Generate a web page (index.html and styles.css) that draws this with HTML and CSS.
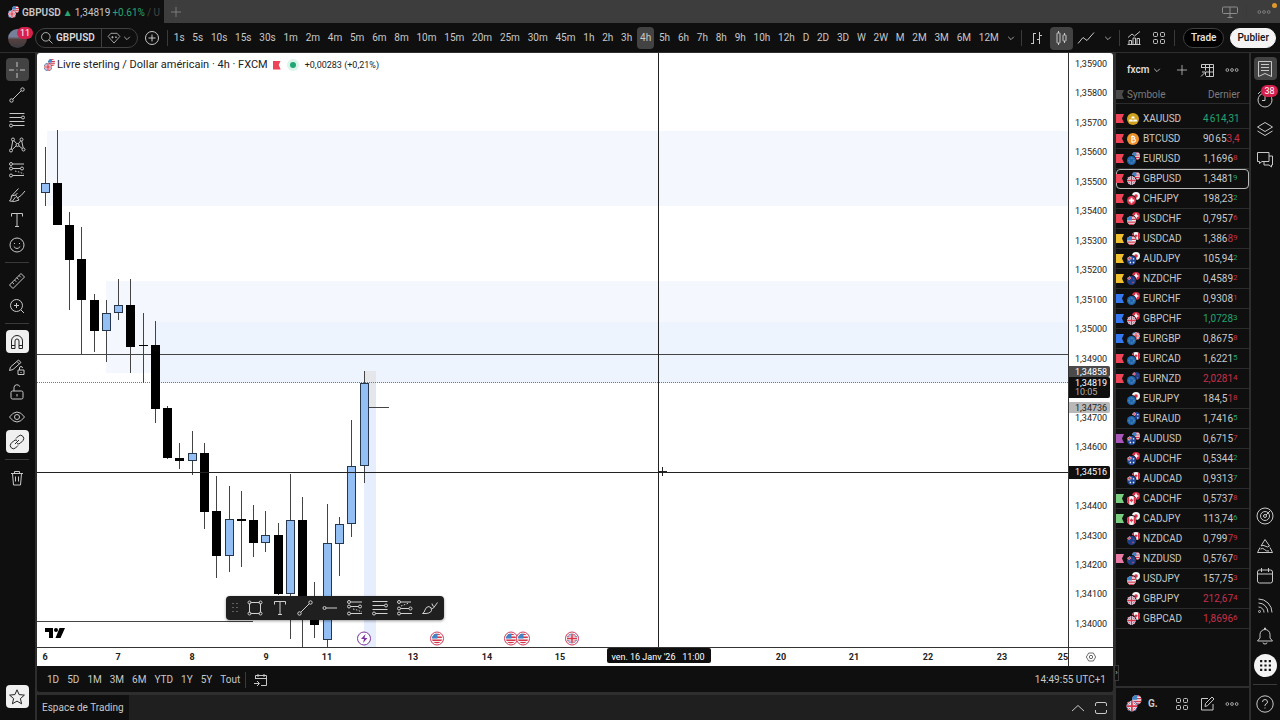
FILE: index.html
```html
<!DOCTYPE html>
<html lang="fr">
<head>
    <meta charset="utf-8">
    <meta name="viewport" content="width=device-width, initial-scale=1">
    <title>GBPUSD 1,34819</title>
    <link rel="stylesheet" href="styles.css">
</head>

<body>
    <!-- icons and flags -->
    <svg class="sprite" aria-hidden="true">
        <defs>
            <clipPath id="round"><circle cx="10" cy="10" r="10"/></clipPath>
        </defs>

        <symbol id="usd" viewBox="0 0 20 20"><g clip-path="url(#round)"><path fill="#f0f0f0" d="M0 0h20v20H0z"/><path fill="#d8344c" d="M0 0h20v3H0zM0 6h20v3H0zM0 12h20v3H0zM0 17h20v3H0z"/><path fill="#3f86c8" d="M0 0h11v10H0z"/></g></symbol>
        <symbol id="gbp" viewBox="0 0 20 20"><g clip-path="url(#round)"><path fill="#2c4d9c" d="M0 0h20v20H0z"/><path stroke="#f0f0f0" stroke-width="4" d="M0 0l20 20M20 0L0 20"/><path stroke="#d8344c" stroke-width="1.5" d="M0 0l20 20M20 0L0 20"/><path stroke="#f0f0f0" stroke-width="6" d="M10 0v20M0 10h20"/><path stroke="#d8344c" stroke-width="3" d="M10 0v20M0 10h20"/></g></symbol>
        <symbol id="eur" viewBox="0 0 20 20"><g clip-path="url(#round)"><path fill="#1f64ad" d="M0 0h20v20H0z"/><circle cx="10" cy="10" r="5.5" fill="none" stroke="#8fb7a0" stroke-width="2" stroke-dasharray="2 2"/></g></symbol>
        <symbol id="chf" viewBox="0 0 20 20"><g clip-path="url(#round)"><path fill="#dc3049" d="M0 0h20v20H0z"/><path stroke="#fff" stroke-width="4" d="M10 4v12M4 10h12"/></g></symbol>
        <symbol id="jpy" viewBox="0 0 20 20"><g clip-path="url(#round)"><path fill="#f4f4f4" d="M0 0h20v20H0z"/><circle cx="10" cy="10" r="4.5" fill="#dc3049"/></g></symbol>
        <symbol id="cad" viewBox="0 0 20 20"><g clip-path="url(#round)"><path fill="#f4f4f4" d="M0 0h20v20H0z"/><path fill="#dc3049" d="M0 0h5v20H0zM15 0h5v20h-5zM10 5l1.500 2.500 2.500 0-1 3.500-2.500 1.500V15h-1v-2.500L7 11 6 7.500l2.500 0z"/></g></symbol>
        <symbol id="aud" viewBox="0 0 20 20"><g clip-path="url(#round)"><path fill="#234a9a" d="M0 0h20v20H0z"/><path stroke="#f0f0f0" stroke-width="4" d="M5 0v10M0 5h10"/><path stroke="#dc3049" stroke-width="2" d="M5 0v10M0 5h10"/><path fill="#fff" d="M13 5h3v3h-3zM6 13h3v3H6zM13 13h3v3h-3z"/></g></symbol>
        <symbol id="nzd" viewBox="0 0 20 20"><g clip-path="url(#round)"><path fill="#1f4088" d="M0 0h20v20H0z"/><path stroke="#f0f0f0" stroke-width="3" d="M5 0v9M0 5h9"/><path stroke="#dc3049" stroke-width="2" d="M5 0v9M0 5h9"/><path fill="#e0526a" d="M14 6h2v2h-2zM12 13h3v3h-3z"/></g></symbol>
        <symbol id="xau" viewBox="0 0 20 20"><circle cx="10" cy="10" r="10" fill="#d0a01f"/><path fill="#fff" d="M8 6h4l1 3H7zM4 11h5l1 3H3zM11 11h5l1 3h-7z"/></symbol>
        <symbol id="btc" viewBox="0 0 20 20"><circle cx="10" cy="10" r="10" fill="#f0932b"/><path fill="none" stroke="#fff" stroke-width="1.800" d="M8 5v10M7 6h4q2 .5 2 2t-2 2H8h4q2 .5 2 2.300T12 15H7M9.500 4v2M9.500 15v2"/></symbol>

        <symbol id="i-cross" viewBox="0 0 18 18"><path d="M9 1v5M9 12v5M1 9h5M12 9h5M8.500 9h1"/></symbol>
        <symbol id="i-trend" viewBox="0 0 18 18"><circle cx="3.500" cy="14.500" r="1.700"/><circle cx="14.500" cy="3.500" r="1.700"/><path d="M4.800 13.200l8.400-8.400"/></symbol>
        <symbol id="i-fib" viewBox="0 0 18 18"><path d="M1.500 2.500h15M1.500 6.500h12M1.500 10.500h15M4.500 14.500h12"/><circle cx="15" cy="6.500" r="1.500"/><circle cx="3" cy="14.500" r="1.500"/></symbol>
        <symbol id="i-pattern" viewBox="0 0 18 18"><circle cx="3" cy="14.500" r="1.500"/><circle cx="5" cy="3.500" r="1.500"/><circle cx="9.500" cy="9" r="1.500"/><circle cx="13.500" cy="3.500" r="1.500"/><circle cx="15.500" cy="13.500" r="1.500"/><path d="M3.300 13L4.700 5M6 4.700l2.700 3M4.200 13.600l4-3.700M10.300 7.800l2.400-3M10.800 9.800l3.400 2.700M13.700 5l1.500 7"/></symbol>
        <symbol id="i-forecast" viewBox="0 0 18 18"><circle cx="3" cy="3" r="1.500"/><circle cx="3" cy="7.500" r="1.500"/><circle cx="14" cy="7.500" r="1.500"/><circle cx="3" cy="14.500" r="1.500"/><path d="M4.500 3H16M4.500 7.500h8M4.500 14.500H16"/><path stroke-dasharray="1.500 1.500" d="M7 10l4 1 5 2"/></symbol>
        <symbol id="i-long" viewBox="0 0 18 18"><circle cx="3" cy="3" r="1.500"/><circle cx="3" cy="9.500" r="1.500"/><circle cx="14.500" cy="9.500" r="1.500"/><circle cx="3" cy="14.500" r="1.500"/><path d="M4.500 3H15M4.500 9.500H13M4.500 14.500H16"/><path stroke-dasharray="1.500 1.500" d="M5 7l8-3"/></symbol>
        <symbol id="i-brush" viewBox="0 0 18 18"><path d="M1.500 15q2-1.500 2-5L10.500 2.500M1.500 15q5 1.500 9.500-1l-3.500-5-4 1M7.500 9l2-2M9.500 12q4-2 7.500-7M4.500 15l3-4"/></symbol>
        <symbol id="i-text" viewBox="0 0 18 18"><path d="M3.500 5.500v-3h11v3M9 2.500v13M7 15.500h4"/></symbol>
        <symbol id="i-smile" viewBox="0 0 18 18"><circle cx="9" cy="9" r="7"/><path d="M5.800 10.500q3.200 4 6.400 0M6.500 7v1M11.500 7v1"/></symbol>
        <symbol id="i-ruler" viewBox="0 0 18 18"><path d="M1.500 13L13 1.500 16.500 5 5 16.500zM4.200 10.300l1.800 1.800M6.500 8l1.800 1.800M8.800 5.700l1.800 1.800M11 3.500l1.800 1.800"/></symbol>
        <symbol id="i-zoom" viewBox="0 0 18 18"><circle cx="8.500" cy="8.500" r="6"/><path d="M13 13l3 3M8.500 6v5M6 8.500h5"/></symbol>
        <symbol id="i-magnet" viewBox="0 0 18 18"><path d="M3.500 15.500V8a5.500 5.500 0 0 1 11 0v7.500H11V8a2 2 0 0 0-4 0v7.500zM3.500 12.500H7M11 12.500h3.500"/></symbol>
        <symbol id="i-pencil" viewBox="0 0 18 18"><path d="M1.500 12.500l1-3.500 8-7 2.500 2.500-8 7zM9 3.500L11.500 6M10 12h6v4.500h-6zM11.500 12v-2a1.500 1.500 0 0 1 3 0M13 14v1"/></symbol>
        <symbol id="i-lock" viewBox="0 0 18 18"><rect x="3" y="8" width="12" height="8" rx="1.500"/><path d="M6 8V4.500a3 3 0 0 1 5.800-.8M9 11v2.500"/></symbol>
        <symbol id="i-eye" viewBox="0 0 18 18"><path d="M1.500 9Q5 4 9 4t7.500 5Q13 14 9 14T1.500 9z"/><circle cx="9" cy="9" r="2.500"/></symbol>
        <symbol id="i-link" viewBox="0 0 18 18"><path d="M8 5.500l2.500-2.500a3.200 3.200 0 0 1 4.500 4.500L12.500 10q-1.500 1.500-3.500.7M10 12.500L7.500 15A3.200 3.200 0 0 1 3 10.500L5.500 8Q7 6.500 9 7.300M7 11l4-4"/></symbol>
        <symbol id="i-trash" viewBox="0 0 18 18"><path d="M3 4.500h12M6.500 4.500v-2h5v2M4.500 4.500l1 11.500h7l1-11.500M7.500 7.500v5M10.500 7.500v5"/></symbol>
        <symbol id="i-star" viewBox="0 0 18 18"><path d="M9 1.800l2.100 4.800 5.300.5-4 3.500 1.200 5.200L9 13.100l-4.600 2.700 1.200-5.200-4-3.500 5.300-.5z"/></symbol>
        <symbol id="i-rect" viewBox="0 0 18 18"><path d="M4.500 3.500h9M4.500 14.500h9M3.500 4.500v9M14.500 4.500v9"/><circle cx="3.500" cy="3.500" r="1.500"/><circle cx="14.500" cy="3.500" r="1.500"/><circle cx="3.500" cy="14.500" r="1.500"/><circle cx="14.500" cy="14.500" r="1.500"/></symbol>
        <symbol id="i-ray" viewBox="0 0 18 18"><circle cx="3.500" cy="9" r="1.500"/><path d="M5 9h11"/></symbol>
        <symbol id="i-paint" viewBox="0 0 18 18"><path d="M1.500 14.500q2-1 2.500-3.500 1-3.500 4-3.500 3 1 2.500 4-1 3.500-9 3zM10 8.500q1 2 2.500.5l4-5.500M11 4.500q0 3 2.500 3"/></symbol>
        <symbol id="i-grip" viewBox="0 0 18 18"><path stroke-dasharray="1 3" stroke-width="1.500" d="M7 4v10M11 4v10"/></symbol>

        <symbol id="i-search" viewBox="0 0 18 18"><circle cx="7.500" cy="7.500" r="5.500"/><path d="M11.500 11.500L16 16"/></symbol>
        <symbol id="i-gem" viewBox="0 0 18 18"><path d="M5 3h8l3.500 4L9 15.500 1.500 7zM5.500 8h3M7 6.500v3M10.500 8h2M11.500 7v2"/></symbol>
        <symbol id="i-plus" viewBox="0 0 18 18"><path d="M9 2.500v13M2.500 9h13"/></symbol>
        <symbol id="i-add" viewBox="0 0 18 18"><circle cx="9" cy="9" r="6.500"/><path d="M9 5.500v7M5.500 9h7"/></symbol>
        <symbol id="i-down" viewBox="0 0 10 10"><path d="M1.500 3.500L5 7l3.500-3.500"/></symbol>
        <symbol id="i-bars" viewBox="0 0 18 18"><path d="M6.500 4v11M4 14.500h2.500M6.500 4.500H9M12.500 3v12M10 10.500h2.500M12.500 6.500H15"/></symbol>
        <symbol id="i-candles" viewBox="0 0 18 18"><path d="M6.500 2v2M6.500 14v2M12.500 4v2M12.500 12v2"/><rect x="5" y="4" width="3" height="10" rx=".5"/><rect x="11" y="6" width="3" height="6" rx=".5"/></symbol>
        <symbol id="i-line" viewBox="0 0 18 18"><path d="M1 14.500l5-6 4 3 7-8"/></symbol>
        <symbol id="i-indic" viewBox="0 0 18 18"><path d="M4 15.500v-4h2.500v4M8 15.500V9h2.500v6.500M12 15.500V9.500h2.500v6M3 8.500l4-3.500 2.500 2L15 2.500M2.500 15.500h13"/></symbol>
        <symbol id="i-grid" viewBox="0 0 18 18"><rect x="3.500" y="3.500" width="4" height="4" rx="1"/><rect x="10.500" y="3.500" width="4" height="4" rx="1"/><rect x="3.500" y="10.500" width="4" height="4" rx="1"/><rect x="10.500" y="10.500" width="4" height="4" rx="1"/></symbol>
        <symbol id="i-layout" viewBox="0 0 18 18"><rect x="1.500" y="4" width="15" height="6.500" rx="1"/><path d="M9 4v10.500M6.500 14.500h5"/></symbol>
        <symbol id="i-dots" viewBox="0 0 18 18"><circle cx="3" cy="9" r="1.800"/><circle cx="9" cy="9" r="1.800"/><circle cx="15" cy="9" r="1.800"/></symbol>
        <symbol id="i-table" viewBox="0 0 18 18"><path d="M3.500 7V3.500h12v12H8M3.500 6.500h12M7.500 3.500v6M11.500 3.500v12M8 11h8M7 11.500L3 15.500M4 11h3.500v3.500"/></symbol>
        <symbol id="i-list" viewBox="0 0 18 18"><path d="M2.500 1.500h13v15L9 13.500l-6.500 3zM5 4.500h8M5 7.500h8M5 10.500h8"/></symbol>
        <symbol id="i-clock" viewBox="0 0 18 18"><circle cx="9" cy="10" r="7"/><path d="M9 6v4.500H6M2 4l2.500-2.500"/></symbol>
        <symbol id="i-layers" viewBox="0 0 18 18"><path d="M9 2.500L16.500 7 9 11.500 1.500 7zM1.500 11L9 15.500l7.500-4.500"/></symbol>
        <symbol id="i-chat" viewBox="0 0 18 18"><path d="M1.500 2.500h11.500v9H6l-2.500 2v-2h-2zM13 6h3.500v9h-1v2l-2.500-2H8v-3.500"/></symbol>
        <symbol id="i-radar" viewBox="0 0 18 18"><circle cx="9" cy="9" r="8"/><circle cx="9" cy="9" r="4.500"/><circle cx="9" cy="9" r="1.500"/><path d="M10 8l4.500-4.500"/></symbol>
        <symbol id="i-peaks" viewBox="0 0 18 18"><path d="M5 9l4-6.500L13.500 9q-2 2-4.500 0-2-1.500-4 0zM4 10.500l-2.500 5h15L14 10.500M4.500 12q2.500-1.500 4 .5t4.500 1.500"/></symbol>
        <symbol id="i-cal" viewBox="0 0 18 18"><rect x="1.500" y="3" width="15" height="13" rx="2"/><path d="M1.500 7h15M5.500 1v4M12.500 1v4"/></symbol>
        <symbol id="i-feed" viewBox="0 0 18 18"><circle cx="3.500" cy="14.500" r="1"/><path d="M2.500 10a5.500 5.500 0 0 1 5.500 5.500M2.500 6a9.500 9.500 0 0 1 9.500 9.500M2.500 2a13.500 13.500 0 0 1 13.500 13.500"/></symbol>
        <symbol id="i-bell" viewBox="0 0 18 18"><path d="M1.500 14h15l-2.500-3V7.500a5 5 0 0 0-10 0V11zM7 15.500a2 1.500 0 0 0 4 0M8.500 2.500V1h1v1.500"/></symbol>
        <symbol id="i-help" viewBox="0 0 18 18"><circle cx="9" cy="9" r="8.200"/><path d="M6.500 7q0-2.500 2.500-2.500T11.500 7q0 1.300-1.500 2t-1 2M9 12.500v1"/></symbol>
        <symbol id="i-goto" viewBox="0 0 18 18"><path d="M4.500 8V4.500h11V14.500H10M4.500 7.500h11M7 3v3M13 3v3M3 12.500h5M6 10l2.500 2.500L6 15"/></symbol>
        <symbol id="i-up" viewBox="0 0 18 18"><path d="M3 12l6-5.500 6 5.500"/></symbol>
        <symbol id="i-full" viewBox="0 0 18 18"><path d="M3.500 7V5q0-1.500 1.500-1.500h8q1.500 0 1.500 1.500V7M3.500 11v2q0 1.500 1.500 1.500h8q1.500 0 1.500-1.500V11"/></symbol>
        <symbol id="i-edit" viewBox="0 0 18 18"><path d="M10 3.500H3.500v11.500h11.500V9M7 11.500l.5-3L14 2l2 2-6.500 6.700z"/></symbol>
        <symbol id="i-hex" viewBox="0 0 18 18"><path d="M5.500 3h7L16 9l-3.500 6h-7L2 9z"/><circle cx="9" cy="9" r="2.500"/></symbol>
    </svg>

    <header class="tabs">
        <div class="tab">
            <svg class="pair" viewBox="0 0 13 13"><use href="#usd" x="5" y="0" width="7" height="7"/><use href="#gbp" x="1" y="4" width="8" height="8"/></svg>
            <b>GBPUSD</b><span class="rise">▲</span><span>1,34819</span><span class="rise">+0.61%</span><span class="faded">/ U</span>
        </div>
        <button class="icon-btn dim" aria-label="Nouvel onglet"><svg class="ico small"><use href="#i-plus"/></svg></button>
        <div class="tabs-right">
            <button class="icon-btn dim" aria-label="Disposition"><svg class="ico"><use href="#i-layout"/></svg></button>
            <i class="vsep"></i>
            <button class="icon-btn dim notify" aria-label="Menu"><svg class="ico small"><use href="#i-dots"/></svg></button>
        </div>
    </header>

    <nav class="toolbar">
        <button class="avatar" aria-label="Profil"><span class="badge">11</span></button>
        <div class="search">
            <button class="symbol-btn"><svg class="ico small"><use href="#i-search"/></svg>GBPUSD</button>
            <button class="gem-btn" aria-label="Filtres"><svg class="ico small"><use href="#i-gem"/></svg><svg class="chev"><use href="#i-down"/></svg></button>
        </div>
        <button class="icon-btn" aria-label="Comparer"><svg class="ico"><use href="#i-add"/></svg></button>
        <i class="vsep"></i>
        <div class="intervals">
            <button>1s</button><button>5s</button><button>10s</button><button>15s</button><button>30s</button>
            <button>1m</button><button>2m</button><button>4m</button><button>5m</button><button>6m</button><button>8m</button>
            <button>10m</button><button>15m</button><button>20m</button><button>25m</button><button>30m</button><button>45m</button>
            <button>1h</button><button>2h</button><button>3h</button><button class="on">4h</button><button>5h</button><button>6h</button>
            <button>7h</button><button>8h</button><button>9h</button><button>10h</button><button>12h</button>
            <button>D</button><button>2D</button><button>3D</button><button>W</button><button>2W</button>
            <button>M</button><button>2M</button><button>3M</button><button>6M</button><button>12M</button>
            <button aria-label="Intervalles"><svg class="chev"><use href="#i-down"/></svg></button>
        </div>
        <i class="vsep"></i>
        <div class="styles">
            <button class="icon-btn" aria-label="Barres"><svg class="ico"><use href="#i-bars"/></svg></button>
            <button class="icon-btn on" aria-label="Bougies"><svg class="ico"><use href="#i-candles"/></svg></button>
            <button class="icon-btn" aria-label="Ligne"><svg class="ico"><use href="#i-line"/></svg></button>
            <button class="chev-btn" aria-label="Styles"><svg class="chev"><use href="#i-down"/></svg></button>
        </div>
        <i class="vsep"></i>
        <div class="styles">
            <button class="icon-btn" aria-label="Indicateurs"><svg class="ico"><use href="#i-indic"/></svg></button>
            <button class="icon-btn" aria-label="Modèles"><svg class="ico"><use href="#i-grid"/></svg></button>
        </div>
        <i class="vsep"></i>
        <div class="actions">
            <button class="pill">Trade</button>
            <button class="pill white">Publier</button>
        </div>
    </nav>

    <div class="workspace">
        <aside class="tools">
            <button class="icon-btn on" aria-label="Réticule"><svg class="ico"><use href="#i-cross"/></svg></button>
            <button class="icon-btn" aria-label="Ligne de tendance"><svg class="ico"><use href="#i-trend"/></svg></button>
            <button class="icon-btn" aria-label="Fibonacci"><svg class="ico"><use href="#i-fib"/></svg></button>
            <button class="icon-btn" aria-label="Figures"><svg class="ico"><use href="#i-pattern"/></svg></button>
            <button class="icon-btn" aria-label="Prévisions"><svg class="ico"><use href="#i-forecast"/></svg></button>
            <button class="icon-btn" aria-label="Pinceau"><svg class="ico"><use href="#i-brush"/></svg></button>
            <button class="icon-btn" aria-label="Texte"><svg class="ico"><use href="#i-text"/></svg></button>
            <button class="icon-btn" aria-label="Icônes"><svg class="ico"><use href="#i-smile"/></svg></button>
            <hr>
            <button class="icon-btn" aria-label="Mesurer"><svg class="ico"><use href="#i-ruler"/></svg></button>
            <button class="icon-btn" aria-label="Zoom"><svg class="ico"><use href="#i-zoom"/></svg></button>
            <hr>
            <button class="icon-btn white" aria-label="Aimant"><svg class="ico"><use href="#i-magnet"/></svg></button>
            <button class="icon-btn" aria-label="Mode dessin"><svg class="ico"><use href="#i-pencil"/></svg></button>
            <button class="icon-btn" aria-label="Verrouiller"><svg class="ico"><use href="#i-lock"/></svg></button>
            <button class="icon-btn" aria-label="Masquer"><svg class="ico"><use href="#i-eye"/></svg></button>
            <button class="icon-btn white" aria-label="Synchroniser"><svg class="ico"><use href="#i-link"/></svg></button>
            <hr>
            <button class="icon-btn" aria-label="Supprimer"><svg class="ico"><use href="#i-trash"/></svg></button>
            <button class="icon-btn white last" aria-label="Favoris"><svg class="ico"><use href="#i-star"/></svg></button>
        </aside>

        <main class="center">
            <section class="chart">
                <div class="pane">
                    <svg id="canvas" class="canvas"></svg>
                    <div class="legend">
                        <svg class="pair" viewBox="0 0 13 13"><use href="#usd" x="5" y="0" width="7" height="7"/><use href="#gbp" x="1" y="4" width="8" height="8"/></svg>
                        <span class="name">Livre sterling / Dollar américain · 4h · FXCM</span>
                        <i class="flag red"></i>
                        <i class="live"></i>
                        <span>+0,00283 (+0,21%)</span>
                    </div>
                    <div class="favorites">
                        <svg class="ico grip"><use href="#i-grip"/></svg>
                        <button aria-label="Rectangle"><svg class="ico"><use href="#i-rect"/></svg></button>
                        <button aria-label="Texte"><svg class="ico"><use href="#i-text"/></svg></button>
                        <button aria-label="Tendance"><svg class="ico"><use href="#i-trend"/></svg></button>
                        <button aria-label="Rayon"><svg class="ico"><use href="#i-ray"/></svg></button>
                        <button aria-label="Position vendeuse"><svg class="ico"><use href="#i-forecast"/></svg></button>
                        <button aria-label="Fibonacci"><svg class="ico"><use href="#i-fib"/></svg></button>
                        <button aria-label="Position acheteuse"><svg class="ico"><use href="#i-long"/></svg></button>
                        <button aria-label="Pinceau"><svg class="ico"><use href="#i-paint"/></svg></button>
                    </div>
                </div>
                <svg id="prices" class="prices"></svg>
                <svg id="times" class="times"></svg>
                <button class="axis-btn" aria-label="Réglages"><svg class="ico tiny"><use href="#i-hex"/></svg></button>
            </section>

            <section class="ranges">
                <button>1D</button><button>5D</button><button>1M</button><button>3M</button><button>6M</button>
                <button>YTD</button><button>1Y</button><button>5Y</button><button>Tout</button>
                <i class="vsep"></i>
                <button aria-label="Aller à"><svg class="ico"><use href="#i-goto"/></svg></button>
                <span class="clock">14:49:55 UTC+1</span>
            </section>

            <footer class="bottom">
                <button class="space">Espace de Trading</button>
                <div class="bottom-right">
                    <button class="icon-btn" aria-label="Ouvrir"><svg class="ico"><use href="#i-up"/></svg></button>
                    <button class="icon-btn" aria-label="Agrandir"><svg class="ico"><use href="#i-full"/></svg></button>
                </div>
            </footer>
        </main>

        <aside class="watch">
            <div class="watch-list">
                <div class="watch-head">
                    <button class="list-name">fxcm<svg class="chev"><use href="#i-down"/></svg></button>
                    <button class="icon-btn" aria-label="Ajouter"><svg class="ico small"><use href="#i-plus"/></svg></button>
                    <button class="icon-btn" aria-label="Tableau"><svg class="ico"><use href="#i-table"/></svg></button>
                    <button class="icon-btn" aria-label="Plus"><svg class="ico small"><use href="#i-dots"/></svg></button>
                </div>
                <table>
                    <thead>
                        <tr><th><i class="flag grey"></i></th><th>Symbole</th><th class="last-price">Dernier</th></tr>
                    </thead>
                    <tbody id="rows"></tbody>
                </table>
                <button class="handle" aria-label="Replier">›</button>
            </div>
            <div class="watch-foot">
                <svg class="pair big" viewBox="0 0 13 13"><use href="#usd" x="5" y="0" width="7" height="7"/><use href="#gbp" x="1" y="4" width="8" height="8"/></svg>
                <b>G.</b>
                <button class="icon-btn" aria-label="Détails"><svg class="ico"><use href="#i-grid"/></svg></button>
                <button class="icon-btn" aria-label="Note"><svg class="ico"><use href="#i-edit"/></svg></button>
                <button class="icon-btn" aria-label="Plus"><svg class="ico small"><use href="#i-dots"/></svg></button>
            </div>
        </aside>

        <aside class="side">
            <button class="icon-btn on" aria-label="Watchlist"><svg class="ico"><use href="#i-list"/></svg></button>
            <button class="icon-btn" aria-label="Alertes"><svg class="ico"><use href="#i-clock"/></svg><span class="badge">38</span></button>
            <button class="icon-btn" aria-label="Objets"><svg class="ico"><use href="#i-layers"/></svg></button>
            <button class="icon-btn" aria-label="Chats"><svg class="ico"><use href="#i-chat"/></svg></button>
            <button class="icon-btn push" aria-label="Screeners"><svg class="ico"><use href="#i-radar"/></svg></button>
            <button class="icon-btn" aria-label="Pine"><svg class="ico"><use href="#i-peaks"/></svg></button>
            <button class="icon-btn" aria-label="Calendrier"><svg class="ico"><use href="#i-cal"/></svg></button>
            <button class="icon-btn" aria-label="Flux"><svg class="ico"><use href="#i-feed"/></svg></button>
            <button class="icon-btn" aria-label="Notifications"><svg class="ico"><use href="#i-bell"/></svg></button>
            <button class="icon-btn apps" aria-label="Produits"><svg viewBox="0 0 12 12"><path d="M1 1h2v2H1zM5 1h2v2H5zM9 1h2v2H9zM1 5h2v2H1zM5 5h2v2H5zM9 5h2v2H9zM1 9h2v2H1zM5 9h2v2H5zM9 9h2v2H9z"/></svg></button>
            <hr>
            <button class="icon-btn" aria-label="Aide"><svg class="ico"><use href="#i-help"/></svg></button>
        </aside>
    </div>

    <script src="script.js"></script>
</body>
</html>
```
FILE: styles.css
```css
body {
    margin: 0;
    height: 100vh;
    display: flex;
    flex-direction: column;
    background-color: #2e2e2e;
    color: #c8c8c8;
    font-family: Roboto, "Liberation Sans", sans-serif;
    font-size: 10px;
    line-height: 12px;
    overflow: hidden;
}

button {
    font: inherit;
    color: inherit;
    background: none;
    border: none;
    padding: 0;
    cursor: pointer;
}

.sprite {
    position: absolute;
    width: 0;
    height: 0;
}

/* icons */
.ico {
    display: block;
    width: 18px;
    height: 18px;
    flex: none;
    fill: none;
    stroke: currentColor;
    stroke-width: 1;
}

.ico.small {
    width: 14px;
    height: 14px;
}

.ico.tiny {
    width: 12px;
    height: 12px;
}

.chev {
    display: block;
    width: 8px;
    height: 8px;
    fill: none;
    stroke: currentColor;
}

.icon-btn {
    display: flex;
    align-items: center;
    justify-content: center;
    flex: none;
    width: 23px;
    height: 23px;
    border-radius: 4px;
    position: relative;
}

.on {
    background-color: #434343;
}

.icon-btn.white {
    background-color: #f0f0f0;
    color: #222;
}

.dim {
    color: #8c8c8c;
}

.vsep {
    width: 1px;
    height: 16px;
    flex: none;
    background-color: #3a3a3a;
}

.pair {
    width: 13px;
    height: 13px;
    flex: none;
}

.pair.big {
    width: 18px;
    height: 18px;
}

.badge {
    position: absolute;
    top: -2px;
    right: -6px;
    padding: 0 3px;
    border-radius: 7px;
    background-color: #d6204e;
    color: #fff;
    font-size: 9px;
    line-height: 12px;
}

.flag {
    display: block;
    width: 8px;
    height: 9px;
    clip-path: polygon(0 0, 100% 0, 75% 50%, 100% 100%, 0 100%);
}

.red { background-color: #ef4358; }
.yellow { background-color: #f0c02f; }
.blue { background-color: #3579f0; }
.purple { background-color: #aa57bb; }
.green { background-color: #79cf7f; }
.pink { background-color: #ec7aa6; }
.grey { background-color: #4a4a4a; }

/* window tabs */
.tabs {
    display: flex;
    align-items: center;
    height: 23px;
    flex: none;
    background-color: #3d3d3d;
}

.tab {
    display: flex;
    align-items: center;
    gap: 2px;
    width: 157px;
    height: 23px;
    padding: 2px 0 0 7px;
    box-sizing: border-box;
    flex-basis: 164px;
    background-color: #0f0f0f;
    white-space: nowrap;
    overflow: hidden;
}

.tab b {
    font-weight: 600;
}

.rise {
    color: #27a573;
}

.faded {
    color: #444;
}

.tabs-right {
    display: flex;
    align-items: center;
    gap: 5px;
    margin-left: auto;
    padding-right: 5px;
}

.notify::after {
    content: "";
    position: absolute;
    top: 3px;
    right: -2px;
    width: 5px;
    height: 5px;
    border-radius: 50%;
    background-color: #e09a2b;
}

/* main toolbar */
.toolbar {
    display: flex;
    align-items: center;
    gap: 3px;
    height: 29px;
    flex: none;
    box-sizing: border-box;
    padding: 1px 4px 0 8px;
    background-color: #0f0f0f;
}

.avatar {
    position: relative;
    width: 19px;
    height: 19px;
    margin-right: 5px;
    border-radius: 50%;
    background: linear-gradient(#75809a 40%, #55413f 55%, #3a3a40);
}

.search {
    display: flex;
    align-items: center;
    height: 18px;
    border: 1px solid #404040;
    border-radius: 10px;
}

.symbol-btn {
    display: flex;
    align-items: center;
    gap: 2px;
    padding: 0 6px 0 4px;
    font-weight: 600;
    color: #dcdcdc;
}

.gem-btn {
    display: flex;
    align-items: center;
    gap: 2px;
    height: 18px;
    padding: 0 6px 0 5px;
    border-left: 1px solid #404040;
}

.intervals {
    display: flex;
    align-items: center;
    justify-content: space-between;
    flex: 1;
}

.intervals button {
    height: 22px;
    padding: 0 3px;
    border-radius: 4px;
}

.styles {
    display: flex;
    align-items: center;
    gap: 2px;
}

.chev-btn {
    padding: 0 4px;
}

.actions {
    display: flex;
    gap: 6px;
    margin-left: 5px;
}

.pill {
    height: 20px;
    padding: 0 7px;
    border: 1px solid #404040;
    border-radius: 10px;
    background-color: #000;
    color: #e6e6e6;
    font-weight: 500;
}

.pill.white {
    padding: 0 6px;
    background-color: #f4f4f4;
    border-color: #f4f4f4;
    color: #111;
}

/* workspace */
.workspace {
    display: flex;
    flex: 1;
    min-height: 0;
    gap: 2px;
    padding-top: 1px;
}

.tools {
    display: flex;
    flex-direction: column;
    align-items: center;
    gap: 2px;
    width: 35px;
    flex: none;
    box-sizing: border-box;
    padding: 5px 1px 12px 0;
    background-color: #0f0f0f;
}

hr {
    width: 24px;
    height: 1px;
    margin: 4px 0;
    border: none;
    background-color: #3a3a3a;
}

.last {
    margin-top: auto;
}

.center {
    display: flex;
    flex-direction: column;
    flex: 1;
    min-width: 0;
}

.chart {
    display: grid;
    grid-template-columns: 1fr 45px;
    grid-template-rows: 1fr 19px;
    flex: 1;
    min-height: 0;
    background-color: #fff;
    color: #222;
    border-radius: 3px 3px 0 0;
    overflow: hidden;
}

.pane {
    position: relative;
    min-width: 0;
    min-height: 0;
}

.canvas {
    position: absolute;
    width: 100%;
    height: 100%;
}

.prices, .times {
    width: 100%;
    height: 100%;
    box-sizing: border-box;
}

.prices {
    border-left: 1px solid #333;
}

.times {
    border-top: 1px solid #333;
}

.prices text {
    font-size: 9px;
    fill: #222;
}

.prices text.light { fill: #fff; }

.prices text.muted { fill: #b0b0b0; }

.times text {
    font-size: 9px;
    font-weight: 700;
    text-anchor: middle;
    fill: #222;
}

.times text.light {
    font-weight: 400;
    fill: #fff;
    white-space: pre;
}

.axis-btn {
    display: flex;
    align-items: center;
    justify-content: center;
    border-top: 1px solid #333;
    border-left: 1px solid #333;
}

.legend {
    position: absolute;
    top: 5px;
    left: 6px;
    display: flex;
    align-items: center;
    gap: 5px;
    font-size: 9px;
    line-height: 14px;
}

.legend .name {
    margin-left: -4px;
    font-size: 11px;
}

.live {
    width: 6px;
    height: 6px;
    margin: 0 4px;
    border-radius: 50%;
    background-color: #1fa676;
    box-shadow: 0 0 0 3px #dcf3ea;
}

.favorites {
    position: absolute;
    left: 189px;
    bottom: 27px;
    display: flex;
    align-items: center;
    gap: 7px;
    height: 24px;
    padding: 0 5px 0 0;
    border-radius: 4px;
    background-color: #1f1f1f;
    color: #d0d0d0;
    box-shadow: 0 1px 3px rgba(0, 0, 0, 0.4);
}

.favorites .grip {
    margin-right: -5px;
    color: #777;
}

/* date ranges */
.ranges {
    display: flex;
    align-items: center;
    gap: 8px;
    height: 26px;
    flex: none;
    box-sizing: border-box;
    padding: 2px 7px 0 10px;
    background-color: #0f0f0f;
    border-radius: 0 0 3px 3px;
}

.ranges .vsep {
    margin: 0 -3px;
}

.clock {
    margin-left: auto;
}

.bottom {
    display: flex;
    align-items: center;
    height: 25px;
    flex: none;
    margin-top: 3px;
    background-color: #1f1f1f;
}

.space {
    height: 25px;
    padding: 0 5px;
    background-color: #0f0f0f;
}

.bottom-right {
    display: flex;
    margin-left: auto;
    padding-right: 1px;
}

/* watchlist */
.watch {
    display: flex;
    flex-direction: column;
    gap: 2px;
    width: 133px;
    flex: none;
    margin-left: 1px;
}

.watch-list {
    position: relative;
    flex: 1;
    min-height: 0;
    background-color: #0f0f0f;
}

.watch-head {
    display: flex;
    align-items: center;
    gap: 2px;
    height: 33px;
    padding: 0 6px 0 11px;
}

.list-name {
    display: flex;
    align-items: center;
    gap: 4px;
    margin-right: auto;
    font-weight: 600;
    color: #dcdcdc;
}

table {
    display: block;
}

thead, tbody {
    display: block;
}

tr {
    display: grid;
    grid-template-columns: 11px 76px 37px;
    align-items: center;
    height: 19px;
    border-bottom: 1px solid #2c2c2c;
}

thead tr {
    height: 17px;
    margin-bottom: 5px;
}

th, td {
    padding: 0;
    text-align: left;
    font-weight: 400;
    white-space: nowrap;
}

th {
    color: #7d7d7d;
}

.sym {
    display: flex;
    align-items: center;
    gap: 3px;
}

.last-price {
    overflow: hidden;
}

th.last-price {
    padding-left: 5px;
}

.tick {
    font-size: 8px;
    line-height: 8px;
    vertical-align: 2px;
}

.up { color: #23a371; }
.down { color: #c5304c; }

tr.selected {
    outline: 1px solid #b8b8b8;
    outline-offset: -1px;
    border-radius: 4px;
}

.handle {
    position: absolute;
    bottom: 5px;
    left: -2px;
    width: 5px;
    height: 16px;
    border: 1px solid #3a3a3a;
    background-color: #0f0f0f;
    font-size: 8px;
    line-height: 10px;
}

.watch-foot {
    display: flex;
    align-items: center;
    gap: 2px;
    height: 32px;
    padding: 0 6px 0 9px;
    background-color: #0f0f0f;
}

.watch-foot b {
    margin: 0 auto 0 3px;
}

/* right bar */
.side {
    display: flex;
    flex-direction: column;
    align-items: center;
    gap: 7px;
    width: 29px;
    flex: none;
    box-sizing: border-box;
    padding: 4px 1px 5px 0;
    background-color: #0f0f0f;
}

.side .badge {
    right: -1px;
}

.side hr {
    margin: 0;
}

.push {
    margin-top: auto;
}

.apps {
    border-radius: 50%;
    background-color: #f4f4f4;
}

.apps svg {
    width: 13px;
    height: 13px;
    fill: #111;
}
```
FILE: script.js
```js
var NS = 'http://www.w3.org/2000/svg';
var canvas = document.getElementById('canvas');
var prices = document.getElementById('prices');
var times = document.getElementById('times');

function add(parent, tag, attrs, text) {
    var el = document.createElementNS(NS, tag);
    for (var key in attrs) el.setAttribute(key, attrs[key]);
    if (text) el.textContent = text;
    parent.appendChild(el);
    return el;
}

function rect(x, y, w, h, fill) {
    add(canvas, 'rect', { x: x, y: y, width: w, height: h, fill: fill });
}

function line(x1, y1, x2, y2, color) {
    return add(canvas, 'line', { x1: x1, y1: y1, x2: x2, y2: y2, stroke: color });
}

// zones
rect(10, 78, '100%', 75, '#f4f8fe');
rect(69, 228, '100%', 92, '#f4f8fe');
rect(118, 269, '100%', 61, '#edf4fe');
rect(327, 318, 12, 276, '#e6eefd');
rect(327, 318, 12, 36, '#e4e6ea');

line(0, 301.5, '100%', 301.5, '#444');
line(0, 568.5, 216, 568.5, '#444');
line(332, 354.5, 352, 354.5, '#444');
line(0, 329.5, '100%', 329.5, '#777').setAttribute('stroke-dasharray', '1 1');

// candles: high, body top, body bottom, low, 1 = bullish
var candles = [
    [94, 130, 140, 153, 1], [77, 130, 172, 172, 0], [159, 172, 207, 257, 0], [174, 206, 247, 301, 0],
    [241, 247, 278, 299, 0], [247, 260, 278, 309, 1], [226, 252, 260, 267, 1], [226, 252, 294, 320, 0],
    [260, 292, 293, 330, 0], [268, 292, 356, 370, 0], [353, 355, 405, 406, 0], [390, 405, 408, 416, 0],
    [378, 400, 408, 422, 1], [390, 400, 459, 476, 0], [423, 458, 503, 525, 0], [433, 466, 503, 519, 1],
    [438, 466, 468, 514, 0], [452, 467, 490, 504, 0], [458, 482, 490, 499, 1], [470, 482, 541, 542, 0],
    [421, 467, 541, 586, 1], [444, 467, 544, 594, 0], [529, 544, 572, 585, 0], [451, 490, 587, 594, 1],
    [464, 471, 491, 523, 1], [367, 413, 471, 484, 1], [318, 330, 413, 430, 1]
];

candles.forEach(function(c, i) {
    var x = Math.round(7.5 + i * 12.27);
    line(x + 0.5, c[0], x + 0.5, c[3], '#444');
    if (c[4]) {
        add(canvas, 'rect', { x: x - 3.5, y: c[1] + 0.5, width: 8, height: c[2] - c[1] - 1, fill: '#94bff5', stroke: '#26364d' });
    } else {
        rect(x - 4, c[1], 9, c[2] - c[1], '#000');
    }
});

// crosshair
line(0, 419.5, '100%', 419.5, '#222');
line(621.5, 0, 621.5, '100%', '#222');
line(621, 418.5, 630, 418.5, '#222');
line(625.5, 414, 625.5, 423, '#222');

// economic events
[[400, 'usd'], [474, 'usd'], [486, 'usd'], [535, 'gbp']].forEach(function(e) {
    add(canvas, 'circle', { cx: e[0], cy: 585.5, r: 6.5, fill: '#fff', stroke: '#cf3a58' });
    add(canvas, 'use', { href: '#' + e[1], x: e[0] - 5, y: 580.5, width: 10, height: 10 });
});
add(canvas, 'circle', { cx: 327, cy: 585.5, r: 6.5, fill: '#fff', stroke: '#7b35a0' });
add(canvas, 'path', { d: 'M328.500 581l-4.500 5h3l-1 4 4.500-5h-3z', fill: '#7b35a0' });

// logo
add(canvas, 'path', { d: 'M8 575h8v10h-4v-6H8zM22.500 575H28l-4.500 10h-5z', fill: '#000' });
add(canvas, 'circle', { cx: 19, cy: 577, r: 2, fill: '#000' });

// price scale
for (var i = 0; i < 20; i++) {
    if (i == 11 || i == 14) continue;
    add(prices, 'text', { x: 6, y: Math.round(14 + i * 29.47) }, '1,' + (35900 - i * 100));
}

function priceLabel(y, h, fill, text, cls) {
    add(prices, 'path', { d: 'M0 ' + y + 'h39q2 0 2 2v' + (h - 4) + 'q0 2-2 2H0z', fill: fill });
    add(prices, 'text', { x: 6, y: y + 9, 'class': cls }, text);
}

priceLabel(313, 11, '#4a4a4a', '1,34858', 'light');
priceLabel(324, 21, '#0f0f0f', '1,34819', 'light');
add(prices, 'text', { x: 6, y: 342, 'class': 'muted' }, '10:05');
priceLabel(349, 11, '#b8b8b8', '1,34736', '');
priceLabel(413, 13, '#0f0f0f', '1,34516', 'light');

// time scale
[[8, '6'], [81, '7'], [155, '8'], [229, '9'], [290, '11'], [376, '13'], [450, '14'], [523, '15'],
 [744, '20'], [817, '21'], [891, '22'], [965, '23'], [1026, '25']].forEach(function(t) {
    add(times, 'text', { x: t[0], y: 12 }, t[1]);
});
add(times, 'rect', { x: 570, y: 0, width: 104, height: 15, rx: 2, fill: '#0f0f0f' });
add(times, 'text', { x: 621, y: 12, 'class': 'light' }, "ven. 16 Janv '26   11:00");

// watchlist: flag, symbol, price, last digits, class of the price, class of the last digits
var list = [
    ['red', 'XAUUSD', '4\u200a614,31', '', 'up', ''],
    ['red', 'BTCUSD', '90\u200a65', '3,4', '', 'down wide'],
    ['red', 'EURUSD', '1,1696', '8', '', 'down'],
    ['red', 'GBPUSD', '1,3481', '9', '', 'up'],
    ['red', 'CHFJPY', '198,23', '2', '', 'up'],
    ['red', 'USDCHF', '0,7957', '6', '', 'down'],
    ['yellow', 'USDCAD', '1,386', '89', '', 'down'],
    ['yellow', 'AUDJPY', '105,94', '2', '', 'up'],
    ['yellow', 'NZDCHF', '0,4589', '2', '', 'down'],
    ['blue', 'EURCHF', '0,9308', '1', '', 'down'],
    ['blue', 'GBPCHF', '1,0728', '3', 'up', 'up'],
    ['blue', 'EURGBP', '0,8675', '8', '', 'down'],
    ['red', 'EURCAD', '1,6221', '5', '', 'up'],
    ['red', 'EURNZD', '2,0281', '4', 'down', 'down'],
    ['', 'EURJPY', '184,5', '18', '', 'down'],
    ['', 'EURAUD', '1,7416', '5', '', 'up'],
    ['purple', 'AUDUSD', '0,6715', '7', '', 'down'],
    ['', 'AUDCHF', '0,5344', '2', '', 'up'],
    ['', 'AUDCAD', '0,9313', '7', '', 'up'],
    ['green', 'CADCHF', '0,5737', '8', '', 'down'],
    ['green', 'CADJPY', '113,74', '6', '', 'up'],
    ['', 'NZDCAD', '0,799', '79', '', 'down'],
    ['pink', 'NZDUSD', '0,5767', '0', '', 'down'],
    ['', 'USDJPY', '157,75', '3', '', 'down'],
    ['', 'GBPJPY', '212,67', '4', 'down', 'down'],
    ['', 'GBPCAD', '1,8696', '6', 'down', 'down']
];

function icon(symbol) {
    var base = symbol.slice(0, 3).toLowerCase();
    var quote = symbol.slice(3).toLowerCase();
    if (base == 'xau' || base == 'btc') {
        return '<svg class="pair" viewBox="0 0 13 13"><use href="#' + base + '" x="0" y="1" width="12" height="12"/></svg>';
    }
    return '<svg class="pair" viewBox="0 0 13 13"><use href="#' + quote + '" x="5" y="0" width="8" height="8"/>' +
        '<circle cx="4.5" cy="8" r="5" fill="#0f0f0f"/><use href="#' + base + '" x="0" y="4" width="9" height="9"/></svg>';
}

// the digits that moved are coloured, only the very last one is smaller
function digits(tail, cls) {
    if (cls == 'down wide') return '<span class="down">' + tail + '</span>';
    return '<span class="' + cls + '">' + tail.slice(0, -1) + '<span class="tick">' + tail.slice(-1) + '</span></span>';
}

document.getElementById('rows').innerHTML = list.map(function(r) {
    return '<tr' + (r[1] == 'GBPUSD' ? ' class="selected"' : '') + '>' +
        '<td>' + (r[0] ? '<i class="flag ' + r[0] + '"></i>' : '') + '</td>' +
        '<td class="sym">' + icon(r[1]) + r[1] + '</td>' +
        '<td class="last-price"><span class="' + r[4] + '">' + r[2] + '</span>' + digits(r[3], r[5]) + '</td></tr>';
}).join('');
```
